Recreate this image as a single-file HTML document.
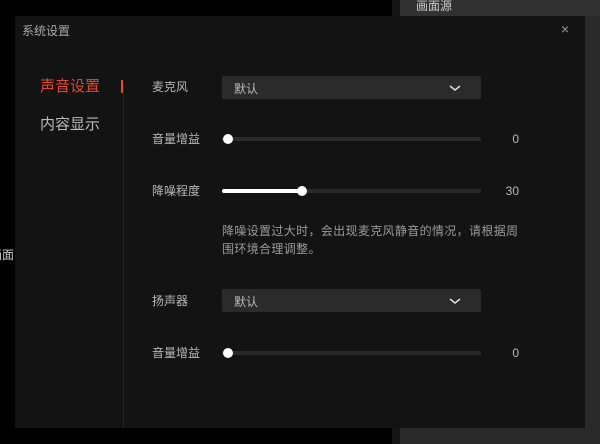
<!DOCTYPE html>
<html><head><meta charset="utf-8"><style>
*{margin:0;padding:0;box-sizing:border-box}
body{width:600px;height:444px;overflow:hidden;background:#000;position:relative;font-family:"Liberation Sans","Noto Sans CJK SC",sans-serif}
.a{position:absolute}
.t{position:absolute;white-space:nowrap;line-height:1}
.lbl{color:#b8b8b8;font-size:12px;left:152px}
.dd{position:absolute;left:222px;width:259px;height:23px;background:#2b2b2b;border-radius:2px}
.dd span{position:absolute;left:12px;top:4px;font-size:12px;color:#bbb}
.tr{position:absolute;left:222px;width:259px;height:4px;background:#2a2a2a;border-radius:2px}
.th{position:absolute;width:10px;height:10px;border-radius:50%;background:#fff}
.v{color:#bbb;font-size:12px;text-align:right;width:40px}
</style></head><body>
<div class="a" style="left:392px;top:0;width:8px;height:444px;background:#151515"></div>
<div class="a" style="left:400px;top:0;width:200px;height:444px;background:#2a2a2a"></div>
<div class="a" style="left:400px;top:0;width:200px;height:16px;background:#313131"></div>
<div class="t" style="left:416px;top:0;font-size:12px;color:#ccc">画面源</div>
<div class="t" style="left:-10px;top:249px;font-size:12px;color:#ccc">画面</div>
<div class="a" style="left:15px;top:16px;width:570px;height:412px;background:#131313"></div>
<div class="t" style="left:22px;top:25px;font-size:12px;color:#aaa">系统设置</div>
<div class="t" style="left:561px;top:22px;font-size:14px;color:#999">×</div>
<div class="a" style="left:123px;top:82px;width:1px;height:346px;background:#262626"></div>
<div class="t" style="left:40px;top:79px;font-size:15px;color:#e8472f">声音设置</div>
<div class="a" style="left:121px;top:80px;width:2px;height:13px;background:#e8472f"></div>
<div class="t" style="left:40px;top:117px;font-size:15px;color:#bbb">内容显示</div>

<div class="t lbl" style="top:81px">麦克风</div>
<div class="dd" style="top:76px"><span>默认</span>
<svg class="a" style="left:227px;top:9px" width="12" height="6"><path d="M1 1L6 5L11 1" stroke="#ddd" stroke-width="1.5" fill="none"/></svg></div>

<div class="t lbl" style="top:133px">音量增益</div>
<div class="tr" style="top:137px"></div><div class="th" style="left:223px;top:134px"></div>
<div class="t v" style="left:479px;top:133px">0</div>

<div class="t lbl" style="top:185px">降噪程度</div>
<div class="tr" style="top:189px"></div><div class="a" style="left:222px;top:189px;width:80px;height:4px;background:#fff;border-radius:2px"></div>
<div class="th" style="left:297px;top:186px"></div>
<div class="t v" style="left:479px;top:185px">30</div>

<div class="t" style="left:222px;top:222px;font-size:12px;color:#9a9a9a;line-height:18px;letter-spacing:0.35px">降噪设置过大时，会出现麦克风静音的情况，请根据周<br>围环境合理调整。</div>

<div class="t lbl" style="top:295px">扬声器</div>
<div class="dd" style="top:289px"><span>默认</span>
<svg class="a" style="left:227px;top:9px" width="12" height="6"><path d="M1 1L6 5L11 1" stroke="#ddd" stroke-width="1.5" fill="none"/></svg></div>

<div class="t lbl" style="top:347px">音量增益</div>
<div class="tr" style="top:351px"></div><div class="th" style="left:223px;top:348px"></div>
<div class="t v" style="left:479px;top:347px">0</div>
</body></html>
